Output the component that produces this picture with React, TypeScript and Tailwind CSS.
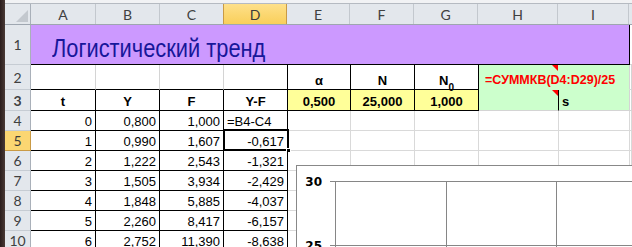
import React from 'react'

// Column widths (include the 1px right border)
const colW = ['w-[65px]', 'w-[64px]', 'w-[64px]', 'w-[64px]', 'w-[63px]', 'w-[64px]', 'w-[64px]', 'w-[80px]', 'w-[71px]']
const letters = ['A', 'B', 'C', 'D', 'E', 'F', 'G', 'H', 'I']

const rows = [
  ['0', '0,800', '1,000', '=B4-C4'],
  ['1', '0,990', '1,607', '-0,617'],
  ['2', '1,222', '2,543', '-1,321'],
  ['3', '1,505', '3,934', '-2,429'],
  ['4', '1,848', '5,885', '-4,037'],
  ['5', '2,260', '8,417', '-6,157'],
  ['6', '2,752', '11,390', '-8,638'],
]

const cellBase = 'shrink-0 h-full flex items-end border-r border-b whitespace-nowrap leading-none pb-[2px]'

const RowHead = ({ n, active }: { n: number; active?: boolean }) => (
  <div
    className={`w-[26px] shrink-0 h-full flex items-center justify-center border-r border-b text-[14px] ${
      active
        ? 'bg-[#fbd672] border-r-[#c99a45] border-b-[#c99a45] text-[#3b3b3b]'
        : 'bg-[#e3e7ec] border-r-[#a9b0b9] border-b-[#c6ccd3] text-[#404040]'
    }`}
    style={{ fontFamily: 'Lato, "Open Sans", sans-serif' }}
  >
    {n}
  </div>
)

const Comment = () => (
  <svg className="absolute top-0 right-0" width="6" height="6" viewBox="0 0 6 6">
    <polygon points="0,0 6,0 6,6" fill="#ff0000" />
  </svg>
)

export default function App() {
  return (
    <div
      className="relative w-[632px] h-[247px] overflow-hidden bg-white flex text-black"
      style={{ fontFamily: '"Liberation Sans", Arial, sans-serif' }}
    >
      {/* window edge */}
      <div className="w-[5px] shrink-0 h-full bg-gradient-to-r from-[#2a1d1c] to-[#4a3a36]" />

      <div className="flex-1 flex flex-col">
        <div className="h-[4px] shrink-0 bg-[#f1f2f4] border-b border-[#b5bac1]" />

        {/* column headers */}
        <div className="flex h-[21px] shrink-0 border-b border-[#9ea6b0] bg-[#e3e7ec]">
          <div className="relative w-[26px] shrink-0 h-full border-r border-[#a9b0b9]">
            <svg className="absolute right-[2px] bottom-[2px]" width="12" height="12" viewBox="0 0 12 12">
              <polygon points="12,0 12,12 0,12" fill="#c3c8ce" />
            </svg>
          </div>
          {letters.map((l, i) => (
            <div
              key={l}
              className={`${colW[i]} shrink-0 h-full flex items-center justify-center border-r text-[14px] ${
                l === 'D'
                  ? 'bg-[linear-gradient(#fee08a,#f9cf5a)] border-r-[#c99a45] border-l border-l-[#c99a45] -ml-px text-[#3b3b3b]'
                  : 'border-r-[#c3c8ce] text-[#404040]'
              }`}
              style={{ fontFamily: 'Lato, "Open Sans", sans-serif' }}
            >
              {l}
            </div>
          ))}
          <div className="flex-1" />
        </div>

        {/* row 1 */}
        <div className="flex h-[40px] shrink-0">
          <RowHead n={1} />
          <div className="w-[599px] shrink-0 h-full bg-[#cc99ff] border-r border-b border-black flex items-end pl-[21px] pb-[3px]">
            <span className="inline-block origin-left scale-x-[0.84] text-[26px] leading-none text-[#17179a] whitespace-nowrap">
              Логистический тренд
            </span>
          </div>
          <div className="flex-1 h-full border-b border-[#d4d4d4]" />
        </div>

        {/* row 2 */}
        <div className="flex h-[25px] shrink-0 text-[13px]">
          <RowHead n={2} />
          <div className={`${cellBase} ${colW[0]} border-r-[#d4d4d4] border-b-black`} />
          <div className={`${cellBase} ${colW[1]} border-r-[#d4d4d4] border-b-black`} />
          <div className={`${cellBase} ${colW[2]} border-r-[#d4d4d4] border-b-black`} />
          <div className={`${cellBase} ${colW[3]} border-black`} />
          <div className={`${cellBase} ${colW[4]} border-black justify-center font-bold`}>α</div>
          <div className={`${cellBase} ${colW[5]} border-black justify-center font-bold`}>N</div>
          <div className={`${cellBase} ${colW[6]} border-black justify-center font-bold`}>
            <span>
              N<sub className="text-[10px] align-[-3px]">0</sub>
            </span>
          </div>
          <div className={`${cellBase} ${colW[7]} relative bg-[#ccffcc] border-r-[#ccffcc] border-b-[#ccffcc] pl-[6px] pb-[3px]`}>
            <span className="relative z-10 font-bold text-[12.5px] text-[#ff0000]">=СУММКВ(D4:D29)/25</span>
            <Comment />
          </div>
          <div className={`${cellBase} ${colW[8]} bg-[#ccffcc] border-r-[#d4d4d4] border-b-[#ccffcc]`} />
          <div className={`${cellBase} flex-1 border-[#d4d4d4]`} />
        </div>

        {/* row 3 */}
        <div className="flex h-[21px] shrink-0 text-[13px] font-bold">
          <RowHead n={3} />
          {['t', 'Y', 'F', 'Y-F'].map((h, i) => (
            <div key={h} className={`${cellBase} ${colW[i]} border-black justify-center`}>
              {h}
            </div>
          ))}
          {['0,500', '25,000', '1,000'].map((v, i) => (
            <div key={v} className={`${cellBase} ${colW[i + 4]} border-black justify-center bg-[#ffff99]`}>
              {v}
            </div>
          ))}
          <div className={`${cellBase} ${colW[7]} relative bg-[#ccffcc] border-r-black border-b-[#d4d4d4]`}>
            <Comment />
          </div>
          <div className={`${cellBase} ${colW[8]} bg-[#ccffcc] border-[#d4d4d4] pl-[3px]`}>s</div>
          <div className={`${cellBase} flex-1 border-[#d4d4d4]`} />
        </div>

        {/* data rows */}
        {rows.map((r, ri) => (
          <div key={ri} className="relative flex h-[20px] shrink-0 text-[13px]">
            <RowHead n={ri + 4} active={ri === 1} />
            {r.map((v, ci) => (
              <div
                key={ci}
                className={`${cellBase} ${colW[ci]} border-black ${
                  ci === 3 && ri === 0 ? 'justify-start pl-[3px]' : 'justify-end pr-[3px]'
                }`}
              >
                {v}
              </div>
            ))}
            {colW.slice(4).map((w, ci) => (
              <div key={ci} className={`${cellBase} ${w} border-[#d9d9d9]`} />
            ))}
            <div className={`${cellBase} flex-1 border-[#d9d9d9]`} />
            {ri === 1 && (
              <div className="absolute left-[218px] top-[-2px] w-[66px] h-[22px] border-2 border-black pointer-events-none">
                <div className="absolute right-[-4px] bottom-[-4px] w-[5px] h-[5px] bg-black border border-white" />
              </div>
            )}
          </div>
        ))}
      </div>

      {/* embedded chart */}
      <div className="absolute left-[296px] top-[165px] w-[380px] h-[120px] bg-white border border-[#888888]">
        <svg className="absolute left-0 top-0" width="380" height="120" shapeRendering="crispEdges">
          <g stroke="#868686" strokeWidth="1">
            <line x1="33" y1="15.5" x2="380" y2="15.5" />
            <line x1="33" y1="79.5" x2="380" y2="79.5" />
            <line x1="38.5" y1="15" x2="38.5" y2="120" />
            <line x1="149.5" y1="15" x2="149.5" y2="120" />
            <line x1="259.5" y1="15" x2="259.5" y2="120" />
          </g>
          <g fontFamily='"DejaVu Sans", Verdana, sans-serif' fontWeight="bold" fontSize="12" fill="#000">
            <text x="25" y="20" textAnchor="end">30</text>
            <text x="25" y="84" textAnchor="end">25</text>
          </g>
        </svg>
      </div>
    </div>
  )
}
